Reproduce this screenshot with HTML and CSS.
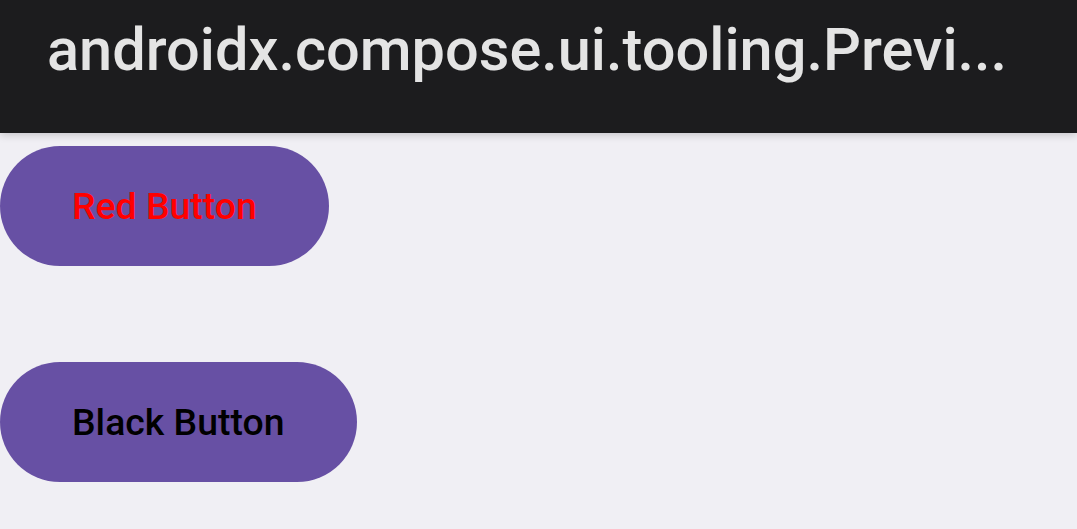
FILE: index.html
```html
<!DOCTYPE html>
<html lang="en">
<head>
  <meta charset="UTF-8" />
  <meta name="viewport" content="width=device-width, initial-scale=1.0" />
  <title>Preview</title>
  <link rel="stylesheet" href="styles.css">
</head>
<body>
  <header class="app-bar">
    <h1 class="app-title">androidx.compose.ui.tooling.Previ...</h1>
  </header>

  <main class="content">
    <button class="pill-button red-text">Red Button</button>
    <button class="pill-button black-text">Black Button</button>
  </main>
</body>
</html>
```

FILE: styles.css
```css
body {
  margin: 0;
  font-family: Roboto, "Noto Sans", sans-serif;
  background: #f0eff4;
  height: 529px;
  overflow: hidden;
}

.app-bar {
  height: 133px;
  background: #1c1c1e;
  box-shadow: 0 2px 8px rgba(0,0,0,0.18);
  display: flex;
  align-items: center;
  padding: 0 47px;
  position: relative;
}

.app-title {
  margin: 0;
  margin-top: -33px;
  color: #e4e4e4;
  font-size: 59.5px;
  font-weight: 500;
  white-space: nowrap;
}

.content {
  display: flex;
  flex-direction: column;
  align-items: flex-start;
  gap: 96px;
  padding-top: 13px;
}

.pill-button {
  height: 120px;
  padding: 0 72px;
  border: none;
  border-radius: 60px;
  background: #6750a4;
  font-family: Roboto, sans-serif;
  font-size: 37.4px;
  font-weight: 500;
}

.red-text {
  color: #ff0000;
}

.black-text {
  color: #000;
}
```
